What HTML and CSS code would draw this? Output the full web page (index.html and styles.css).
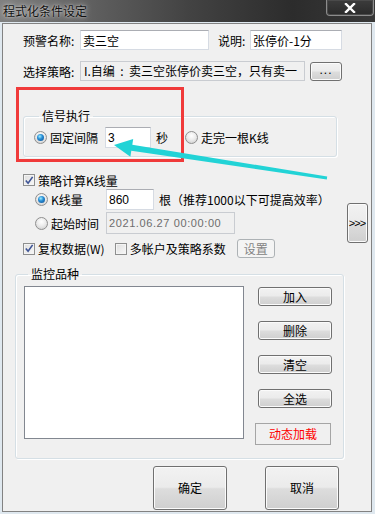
FILE: index.html
```html
<!DOCTYPE html>
<html lang="zh">
<head>
    <meta charset="UTF-8">
    <meta name="viewport" content="width=device-width, initial-scale=1.0">
    <title>程式化条件设定</title>
    <link rel="stylesheet" href="styles.css">
</head>
<body>
   <div class="window">
    <div class="titlebar">
        <span class="title">程式化条件设定</span>
        <span class="close">
            <svg width="12" height="10" viewBox="0 0 12 10"><path d="M2 1 L10 9 M10 1 L2 9" stroke="#fff" stroke-width="2.4" stroke-linecap="square"/></svg>
        </span>
    </div>
    <div class="client">
        <div class="row row-name">
            <label class="lbl">预警名称:</label>
            <input class="edit w-name" type="text" value="卖三空">
            <label class="lbl lbl-desc">说明:</label>
            <input class="edit w-desc" type="text" value="张停价-1分">
        </div>
        <div class="row row-strategy">
            <label class="lbl">选择策略:</label>
            <div class="edit edit-ro w-strategy">I.自编&nbsp;&nbsp;:&nbsp;&nbsp;卖三空张停价卖三空，只有卖一</div>
            <button class="btn btn-more">...</button>
        </div>

        <fieldset class="group group-signal">
            <legend>信号执行</legend>
            <div class="group-row">
                <span class="radio checked"></span>
                <span class="opt">固定间隔</span>
                <input class="edit num w-sec" type="text" value="3">
                <span class="unit">秒</span>
                <span class="radio radio-second"></span>
                <span class="opt">走完一根K线</span>
            </div>
        </fieldset>

        <div class="calc">
            <div class="calc-left">
                <div class="line line-check">
                    <span class="check checked">
                        <svg width="11" height="11" viewBox="0 0 11 11"><path d="M2 5.5 L4.5 8.5 L9.5 1.5" stroke="#3f5596" stroke-width="1.8" fill="none"/></svg>
                    </span>
                    <span>策略计算K线量</span>
                </div>
                <div class="line line-opt">
                    <span class="radio checked"></span>
                    <span class="opt opt-fixed">K线量</span>
                    <input class="edit num w-count" type="text" value="860">
                    <span class="unit">根（推荐1000以下可提高效率）</span>
                </div>
                <div class="line line-opt line-date">
                    <span class="radio"></span>
                    <span class="opt opt-fixed">起始时间</span>
                    <div class="edit edit-ro num w-date">2021.06.27 00:00:00</div>
                </div>
                <div class="line line-flags">
                    <span class="check checked">
                        <svg width="11" height="11" viewBox="0 0 11 11"><path d="M2 5.5 L4.5 8.5 L9.5 1.5" stroke="#3f5596" stroke-width="1.8" fill="none"/></svg>
                    </span>
                    <span>复权数据(W)</span>
                    <span class="check check-multi"></span>
                    <span>多帐户及策略系数</span>
                    <button class="btn btn-disabled btn-set">设置</button>
                </div>
            </div>
            <button class="btn btn-expand">&gt;&gt;&gt;</button>
        </div>

        <fieldset class="group group-watch">
            <legend>监控品种</legend>
            <div class="watch-body">
                <div class="listbox"></div>
                <div class="side">
                    <button class="btn side-btn">加入</button>
                    <button class="btn side-btn">删除</button>
                    <button class="btn side-btn">清空</button>
                    <button class="btn side-btn">全选</button>
                    <div class="dyn">动态加载</div>
                </div>
            </div>
        </fieldset>

        <div class="actions">
            <button class="btn btn-big">确定</button>
            <button class="btn btn-big">取消</button>
        </div>
    </div>

    <!-- annotation drawn over the dialog -->
    <div class="highlight"></div>
    <svg class="arrow" width="375" height="514" viewBox="0 0 375 514">
        <polygon points="114,145 133.2,138.9 132.3,144.8 327.2,176.5 326.8,179.5 131.3,150.8 130.4,156.7" fill="#22d3d6"/>
    </svg>
   </div>
</body>
</html>
```

FILE: styles.css
```css
* {
    margin: 0;
    padding: 0;
    box-sizing: border-box;
}

body {
    width: 375px;
    height: 514px;
    overflow: hidden;
    background: #dfe8ef;
    font-family: "Noto Sans CJK SC", sans-serif;
    font-size: 12px;
    color: #000;
}

.window {
    position: relative;
    width: 375px;
    height: 514px;
}

.titlebar {
    height: 22px;
    margin-bottom: 1px;
    display: flex;
    justify-content: space-between;
    align-items: flex-start;
    background: linear-gradient(90deg, #808080 0%, #626262 22%, #434343 50%, #2c2c2c 78%, #383838 100%);
}

.title {
    padding: 3px 0 0 3px;
    line-height: 16px;
    font-size: 12px;
    color: #111;
    text-shadow: 0 0 6px rgba(255, 255, 255, 0.8), 0 0 2px rgba(255, 255, 255, 0.6);
}

.close {
    width: 48px;
    height: 16px;
    margin-right: 1px;
    display: flex;
    justify-content: center;
    align-items: center;
    border: 1px solid #8c8c8c;
    border-top: none;
    border-radius: 0 0 4px 4px;
    background: linear-gradient(#3c3c3c, #2a2a2a);
    box-shadow: inset 0 0 0 1px #4a4a4a;
}

.client {
    margin-left: 2px;
    width: 370px;
    height: 489px;
    border: 1px solid #828282;
    background: #f0f0f0;
    padding-top: 6px;
}

/* text rows */

.row {
    display: flex;
    align-items: center;
    padding-left: 20px;
}

.row-name {
    height: 20px;
}

.row-strategy {
    height: 20px;
    margin-top: 11px;
}

.lbl {
    width: 57px;
    white-space: nowrap;
}

.lbl-desc {
    width: 41px;
    padding-left: 9px;
}

.edit {
    height: 20px;
    border: 1px solid #d6dbe3;
    border-top-color: #abadb3;
    background: #fff;
    padding: 0 2px;
    font-family: inherit;
    font-size: 12px;
    color: #000;
    outline: none;
    line-height: 18px;
}

.edit-ro {
    background: #f0f0f0;
    border-color: #c9ccd1;
    white-space: nowrap;
    overflow: hidden;
}

.num {
    font-family: "Liberation Sans", sans-serif;
    font-size: 12px;
}

.w-name {
    width: 129px;
}

.w-desc {
    width: 92px;
}

.w-strategy {
    width: 225px;
    padding-left: 3px;
}

/* buttons */

.btn {
    border: 1px solid #707070;
    border-radius: 3px;
    background: linear-gradient(#f2f2f2 0%, #ebebeb 48%, #dddddd 52%, #cfcfcf 100%);
    box-shadow: inset 0 0 0 1px #fbfbfb;
    font-family: "Noto Sans CJK SC", sans-serif;
    font-size: 12px;
    color: #000;
    line-height: 1;
}

.btn-more {
    width: 32px;
    height: 19px;
    margin-left: 5px;
    font-family: "Liberation Sans", sans-serif;
    letter-spacing: 1px;
    padding-bottom: 2px;
}

.btn-disabled {
    border-color: #adb2b5;
    background: #f4f4f4;
    box-shadow: none;
    color: #838383;
}

/* group boxes */

.group {
    border: 1px solid #d5dfe5;
    border-radius: 3px;
    box-shadow: inset 1px 1px 0 #fff, 1px 1px 0 #fff;
}

.group legend {
    padding: 0 3px;
    line-height: 14px;
}

.group-signal {
    width: 314px;
    margin: 28px 0 0 20px;
    padding: 4px 0 8px 10px;
}

.group-signal legend {
    margin-left: 5px;
}

.group-row {
    display: flex;
    align-items: center;
    height: 21px;
}

.radio {
    flex: none;
    position: relative;
    width: 13px;
    height: 13px;
    border-radius: 50%;
    border: 1px solid #8f8f8f;
    background: radial-gradient(circle at 50% 35%, #ffffff 0%, #ececec 45%, #c9c9c9 100%);
}

.radio.checked::after {
    content: '';
    position: absolute;
    inset: 2px;
    border-radius: 50%;
    background: radial-gradient(circle at 40% 35%, #9ef0ff 0%, #2a8ed6 40%, #0b4b8c 100%);
}

.opt {
    margin-left: 3px;
    white-space: nowrap;
}

.w-sec {
    width: 46px;
    height: 21px;
    margin-left: 7px;
}

.unit {
    margin-left: 5px;
    white-space: nowrap;
}

.radio-second {
    margin-left: 17px;
}

/* k-line settings */

.calc {
    display: flex;
    margin-top: 16px;
}

.calc-left {
    padding-left: 20px;
}

.line {
    display: flex;
    align-items: center;
}

.line-check {
    height: 14px;
}

.check {
    flex: none;
    width: 12px;
    height: 12px;
    margin-right: 3px;
    border: 1px solid #8e8f8f;
    background: linear-gradient(135deg, #dedede, #f8f8f8);
    box-shadow: inset 0 0 0 1px #f4f4f4;
    display: flex;
    justify-content: center;
    align-items: center;
}

.line-opt {
    height: 21px;
    margin-top: 2px;
    padding-left: 12px;
}

.opt-fixed {
    width: 55px;
}

.w-count {
    width: 48px;
    height: 21px;
}

.line-date {
    height: 22px;
}

.w-date {
    width: 129px;
    height: 22px;
    line-height: 20px;
    color: #6d6d6d;
    font-size: 11px;
    letter-spacing: 0.6px;
}

.line-flags {
    height: 19px;
    margin-top: 5px;
}

.check-multi {
    margin-left: 10px;
}

.btn-set {
    width: 38px;
    height: 19px;
    margin-left: 11px;
}

.btn-expand {
    width: 21px;
    height: 40px;
    margin: 30px 3px 0 auto;
    font-family: "Liberation Sans", sans-serif;
    font-size: 11px;
    letter-spacing: -1px;
    padding-right: 1px;
}

/* watch list */

.group-watch {
    width: 329px;
    margin: 9px 0 0 12px;
    padding: 5px 0 13px 8px;
}

.group-watch legend {
    margin-left: 4px;
}

.watch-body {
    display: flex;
}

.listbox {
    width: 220px;
    height: 153px;
    border: 1px solid #828790;
    background: #fff;
}

.side {
    width: 76px;
    height: 158px;
    margin: 1px 0 0 11px;
    display: flex;
    flex-direction: column;
    justify-content: space-between;
}

.side-btn {
    width: 74px;
    height: 19px;
    margin-left: 3px;
}

.dyn {
    width: 76px;
    height: 22px;
    border: 1px solid #a5a5a5;
    color: #ff0000;
    text-align: center;
    line-height: 20px;
}

.actions {
    display: flex;
    gap: 38px;
    margin-top: 7px;
    padding-left: 150px;
}

.btn-big {
    width: 74px;
    height: 44px;
}

/* annotation */

.highlight {
    position: absolute;
    left: 16px;
    top: 87px;
    width: 168px;
    height: 75px;
    border: 3px solid #f03a3a;
}

.arrow {
    position: absolute;
    left: 0;
    top: 0;
}
```
